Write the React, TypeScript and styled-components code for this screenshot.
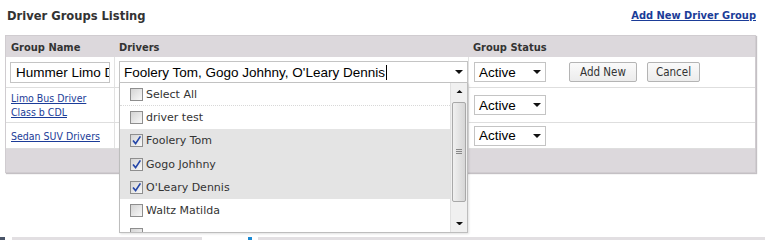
import React from 'react'
import styled, { createGlobalStyle } from 'styled-components'

const GlobalStyle = createGlobalStyle`
  html, body {
    margin: 0;
    padding: 0;
    background: #fff;
  }
  body {
    width: 765px;
    height: 240px;
    overflow: hidden;
  }
`

const condensed = `"DejaVu Sans Condensed", "DejaVu Sans", sans-serif`
const verdana = `"DejaVu Sans", Verdana, sans-serif`
const arial = `"Liberation Sans", Arial, sans-serif`

const Page = styled.div`
  padding: 0 9px 0 5px;
`

const Header = styled.div`
  height: 31px;
  padding: 0 0 4px 2px;
  display: flex;
  align-items: center;
  justify-content: space-between;
`

const Title = styled.h1`
  margin: 0;
  font-family: ${condensed};
  font-stretch: condensed;
  font-size: 12.8px;
  font-weight: bold;
  color: #333;
`

const HeadLink = styled.a`
  font-family: ${condensed};
  font-stretch: condensed;
  font-size: 11px;
  font-weight: bold;
  color: #1b3c98;
  text-decoration: underline;
`

const Table = styled.div`
  border: 1px solid #d0ccd0;
  background: #fff;
  box-shadow: 1px 1px 1px #c4c0c4;
`

const Row = styled.div<{ $height: number; $head?: boolean }>`
  display: grid;
  grid-template-columns: 108px 354px 1fr;
  height: ${({ $height }) => $height}px;
  background: ${({ $head }) => ($head ? '#dcd8dc' : '#fff')};
  border-bottom: ${({ $head }) => ($head ? 'none' : '1px solid #dedede')};
`

const HeadCell = styled.div`
  display: flex;
  align-items: center;
  padding: 2px 5px 0;
  font-family: ${condensed};
  font-stretch: condensed;
  font-size: 11px;
  font-weight: bold;
  color: #333;
`

const Cell = styled.div<{ $first?: boolean; $pad?: number }>`
  position: relative;
  display: flex;
  align-items: center;
  padding-left: ${({ $pad }) => $pad ?? 4}px;
  border-left: ${({ $first }) => ($first ? 'none' : '1px solid #e2e2e2')};
`

const Footer = styled.div`
  height: 23px;
  background: #dcd8dc;
`

const TextInput = styled.div`
  width: 100px;
  height: 21px;
  box-sizing: border-box;
  border: 1px solid #c4c4c4;
  padding-left: 5px;
  overflow: hidden;
  white-space: nowrap;
  font-family: ${arial};
  font-size: 13.5px;
  line-height: 19px;
  color: #000;
`

const SelectWrap = styled.div`
  position: relative;
`

const SelectBox = styled.div<{ $width: number; $height: number }>`
  width: ${({ $width }) => $width}px;
  height: ${({ $height }) => $height}px;
  box-sizing: border-box;
  border: 1px solid #c4c4c4;
  background: #fff;
  display: flex;
  align-items: center;
  justify-content: space-between;
  padding: 0 4px 0 4px;
  font-family: ${arial};
  font-size: 13.5px;
  color: #000;
  white-space: nowrap;
`

const Caret = styled.span`
  display: inline-block;
  width: 1px;
  height: 15px;
  margin-left: 1px;
  background: #000;
  vertical-align: -3px;
`

const Button = styled.button<{ $width: number; $gap: number }>`
  width: ${({ $width }) => $width}px;
  height: 20px;
  margin-left: ${({ $gap }) => $gap}px;
  padding: 0;
  border: 1px solid #b4b4b4;
  border-radius: 2px;
  background: linear-gradient(#fafafa, #ececec);
  font-family: ${condensed};
  font-stretch: condensed;
  font-size: 11.5px;
  color: #333;
`

const NameLink = styled.a`
  font-family: ${condensed};
  font-stretch: condensed;
  font-size: 10.5px;
  line-height: 14px;
  color: #1b3c98;
  text-decoration: underline;
`

const Dropdown = styled.div`
  position: absolute;
  top: 100%;
  left: 0;
  width: 349px;
  height: 150px;
  box-sizing: border-box;
  border: 1px solid #bdbdbd;
  border-top: none;
  background: #fff;
  display: flex;
  box-shadow: 1px 1px 2px rgba(0, 0, 0, 0.12);
  z-index: 2;
`

const Options = styled.div`
  flex: 1;
  overflow: hidden;
`

const Option = styled.div<{ $checked?: boolean; $divider?: boolean }>`
  height: ${({ $divider }) => ($divider ? 22 : 23.3)}px;
  display: flex;
  align-items: center;
  gap: 3px;
  padding-left: 10px;
  background: ${({ $checked }) => ($checked ? '#e4e4e4' : '#fff')};
  border-bottom: ${({ $divider }) => ($divider ? '1px dotted #d8d8d8' : 'none')};
  font-family: ${verdana};
  font-size: 11px;
  color: #333;
`

const Check = styled.span`
  width: 13px;
  height: 13px;
  box-sizing: border-box;
  border: 1px solid #8e8e8e;
  background: linear-gradient(135deg, #d4d4d4, #f8f8f8);
  display: flex;
  align-items: center;
  justify-content: center;
`

const Scrollbar = styled.div`
  width: 16px;
  display: flex;
  flex-direction: column;
  background: #f0f0f0;
  border-left: 1px solid #e0e0e0;
`

const ScrollButton = styled.div`
  height: 17px;
  display: flex;
  align-items: center;
  justify-content: center;
`

const Track = styled.div`
  flex: 1;
  padding: 2px 1px 0;
  display: flex;
  flex-direction: column;
`

const Thumb = styled.div`
  height: 100px;
  box-sizing: border-box;
  border: 1px solid #a8a8a8;
  border-radius: 2px;
  background: linear-gradient(to right, #f0f0f0, #d6d6d6);
  display: flex;
  align-items: center;
  justify-content: center;
`

const BottomStrip = styled.div`
  margin-top: 64px;
  height: 4px;
  display: flex;
`

const StripPart = styled.div<{ $width?: number; $color: string; $gap?: number }>`
  width: ${({ $width }) => ($width ? `${$width}px` : 'auto')};
  flex: ${({ $width }) => ($width ? 'none' : 1)};
  margin-left: ${({ $gap }) => $gap ?? 0}px;
  background: ${({ $color }) => $color};
`

const Arrow = ({ up, size = 8 }: { up?: boolean; size?: number }) => (
  <svg width={size} height={size / 2} viewBox="0 0 8 4">
    <path d={up ? 'M0 4h8L4 0z' : 'M0 0h8L4 4z'} fill="#111" />
  </svg>
)

const Tick = () => (
  <svg width="11" height="11" viewBox="0 0 11 11">
    <path d="M2 5.5L4.6 8.6L9.4 1.4" fill="none" stroke="#2446a8" strokeWidth="1.7" />
  </svg>
)

const drivers = [
  { name: 'Select All', checked: false },
  { name: 'driver test', checked: false },
  { name: 'Foolery Tom', checked: true },
  { name: 'Gogo Johhny', checked: true },
  { name: "O'Leary Dennis", checked: true },
  { name: 'Waltz Matilda', checked: false },
]

const groups = [
  { name: ['Limo Bus Driver', 'Class b CDL'], height: 34 },
  { name: ['Sedan SUV Drivers'], height: 25 },
]

const StatusSelect = () => (
  <SelectBox $width={72} $height={20}>
    Active
    <Arrow />
  </SelectBox>
)

export default function App() {
  return (
    <>
      <GlobalStyle />
      <Page>
        <Header>
          <Title>Driver Groups Listing</Title>
          <HeadLink href="#">Add New Driver Group</HeadLink>
        </Header>
        <Table>
          <Row $height={21} $head>
            <HeadCell>Group Name</HeadCell>
            <HeadCell>Drivers</HeadCell>
            <HeadCell>Group Status</HeadCell>
          </Row>
          <Row $height={30}>
            <Cell $first>
              <TextInput>Hummer Limo Driver</TextInput>
            </Cell>
            <Cell>
              <SelectWrap>
                <SelectBox $width={349} $height={22}>
                  <span>
                    Foolery Tom, Gogo Johhny, O'Leary Dennis
                    <Caret />
                  </span>
                  <Arrow />
                </SelectBox>
                <Dropdown>
                  <Options>
                    {drivers.map((d, i) => (
                      <Option key={d.name} $checked={d.checked} $divider={i === 0}>
                        <Check>{d.checked && <Tick />}</Check>
                        {d.name}
                      </Option>
                    ))}
                    {/* next row, scrolled mostly out of view */}
                    <Option>
                      <Check />
                    </Option>
                  </Options>
                  <Scrollbar>
                    <ScrollButton>
                      <Arrow up size={7} />
                    </ScrollButton>
                    <Track>
                      <Thumb>
                        <svg width="6" height="6" viewBox="0 0 6 6">
                          <path d="M0 0.5h6M0 2.5h6M0 4.5h6" stroke="#888" strokeWidth="1" />
                        </svg>
                      </Thumb>
                    </Track>
                    <ScrollButton>
                      <Arrow size={7} />
                    </ScrollButton>
                  </Scrollbar>
                </Dropdown>
              </SelectWrap>
            </Cell>
            <Cell $pad={5}>
              <StatusSelect />
              <Button $width={68} $gap={23}>Add New</Button>
              <Button $width={53} $gap={10}>Cancel</Button>
            </Cell>
          </Row>
          {groups.map((g) => (
            <Row key={g.name[0]} $height={g.height}>
              <Cell $first $pad={5}>
                <NameLink href="#">
                  {g.name.map((line, i) => (
                    <React.Fragment key={line}>
                      {i > 0 && <br />}
                      {line}
                    </React.Fragment>
                  ))}
                </NameLink>
              </Cell>
              <Cell />
              <Cell $pad={5}>
                <StatusSelect />
              </Cell>
            </Row>
          ))}
          <Footer />
        </Table>
      </Page>
      <BottomStrip>
        <StripPart $width={5} $color="#4a5568" />
        <StripPart $width={190} $gap={7} $color="#e2dfe2" />
        <StripPart $width={4} $gap={46} $color="#1a8ad4" />
        <StripPart $gap={6} $color="#e2dfe2" />
      </BottomStrip>
    </>
  )
}
